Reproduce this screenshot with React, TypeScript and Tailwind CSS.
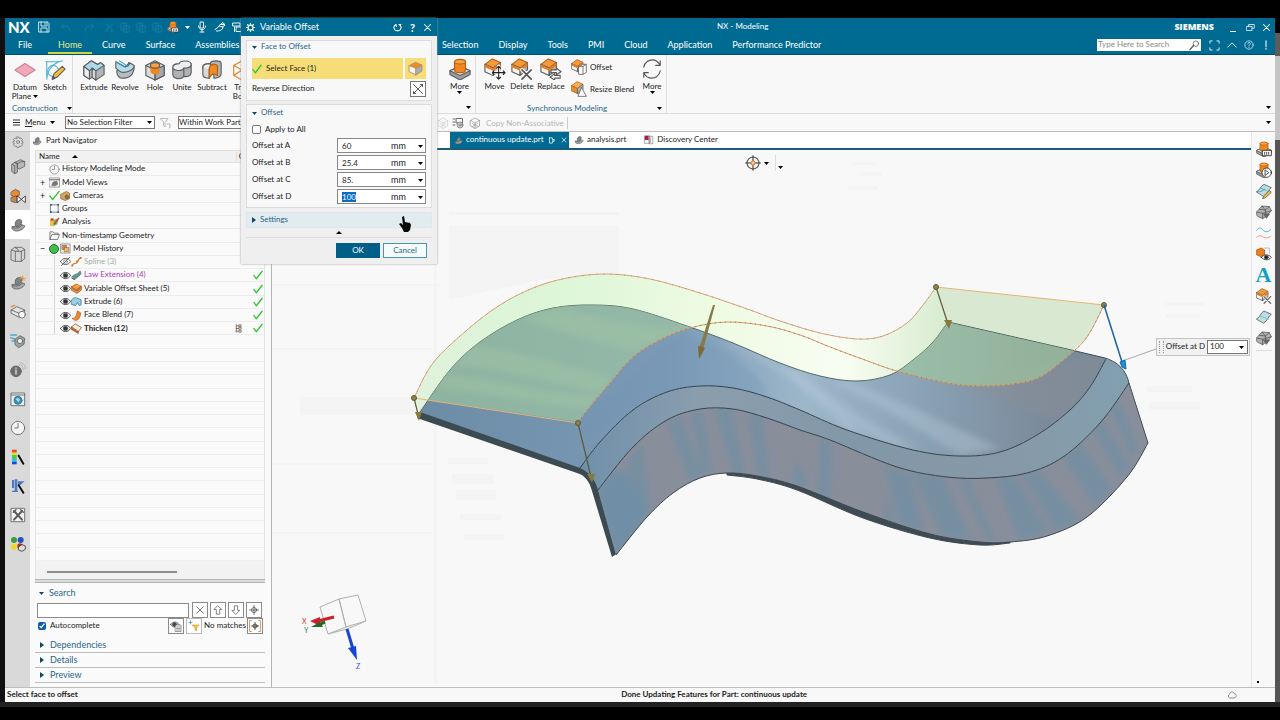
import type { ReactNode } from "react";

type Pt = [number, number];

// Smooth path through a list of points (Catmull-Rom to Bezier)
function smooth(pts: Pt[], start: "M" | "L" = "M") {
  let d = `${start}${pts[0][0]},${pts[0][1]}`;
  for (let i = 0; i < pts.length - 1; i++) {
    const p0 = pts[i - 1] ?? pts[i];
    const p1 = pts[i];
    const p2 = pts[i + 1];
    const p3 = pts[i + 2] ?? p2;
    const c1 = [p1[0] + (p2[0] - p0[0]) / 6, p1[1] + (p2[1] - p0[1]) / 6];
    const c2 = [p2[0] - (p3[0] - p1[0]) / 6, p2[1] - (p3[1] - p1[1]) / 6];
    d += `C${c1[0].toFixed(1)},${c1[1].toFixed(1)} ${c2[0].toFixed(1)},${c2[1].toFixed(1)} ${p2[0]},${p2[1]}`;
  }
  return d;
}

const rev = (pts: Pt[]) => [...pts].reverse() as Pt[];

/* ---------- icons ---------- */

function Svg({ className, children, box = 24 }: { className: string; children: ReactNode; box?: number }) {
  return (
    <svg className={`shrink-0 ${className}`} viewBox={`0 0 ${box} ${box}`} fill="none" stroke="#5a5a5a" strokeWidth="1.2" strokeLinejoin="round" strokeLinecap="round" aria-hidden="true">
      {children}
    </svg>
  );
}

function Box({ top = "#f08a24", left = "#f4f4f4", right = "#a9adb0" }: { top?: string; left?: string; right?: string }) {
  return (
    <g>
      <path d="M2 7 11 2l10 4-9 5z" fill={top} />
      <path d="M2 7l10 4v10L2 16z" fill={left} />
      <path d="M12 11l9-5v9l-9 6z" fill={right} />
    </g>
  );
}

// Block with an orange upper half, used by the synchronous tools
function CapBox() {
  return (
    <g>
      <path d="M1 7 9 1l9 4-8 6z" fill="#f39a3c" stroke="#b35f10" />
      <path d="M1 7l9 4v8l-9-4z" fill="#f4f4f4" />
      <path d="M10 11l8-6v8l-8 6z" fill="#b5b8ba" />
      <path d="M1 7l9 4 8-6v4l-8 5-9-4z" fill="#e57f1f" stroke="none" />
    </g>
  );
}

function Stack() {
  return (
    <g>
      <path d="M1 14l11-5 11 5v4l-11 6-11-6z" fill="#9b9fa3" />
      <path d="M1 14l11-5 11 5-11 5z" fill="#e4e6e8" />
      <path d="M6 4v9c0 4 12 4 12 0V4z" fill="#ef8620" stroke="#b35f10" />
      <ellipse cx="12" cy="4" rx="6" ry="2.500" fill="#f9a544" stroke="#b35f10" />
    </g>
  );
}

function Shell() {
  return (
    <g>
      <path d="M3 15c-1 3 2 6 7 6 6 0 12-4 12-8l-4-1c-3-4-10-2-9 1z" fill="#a3a7aa" />
      <path d="M8 12c-2-7 6-10 9-7 2 3-1 8-6 10z" fill="#7f8487" />
      <path d="M3 15c4 3 12 2 15-3" />
    </g>
  );
}

const glyphs: Record<string, ReactNode> = {
  datum: <path d="M1 12 12 5l11 7-11 7z" fill="#f2a9bb" stroke="#cf7f94" />,
  sketch: (
    <g>
      <path d="M2 3h14M3 22C4 12 8 5 20 2M3 3v18" stroke="#4bb4d8" />
      <circle cx="10" cy="13" r="6" stroke="#4bb4d8" />
      <path d="M9 22l2-6 9-8 3 3-9 9z" fill="#f3bd3e" />
      <path d="M9 22l1-3 2 2z" fill="#333" />
    </g>
  ),
  extrude: (
    <g>
      <path d="M1 8l8-6 7 4 3-2 4 3v10l-9 6-4-3-3 2-6-4z" fill="#aeb4b8" />
      <path d="M1 8l8-6 7 4 3-2 4 3-9 6-4-3-3 3z" fill="#a9dbe8" />
      <path d="M1 8l6 5v9l-6-4z" fill="#eceef0" />
      <path d="M10 10v10l4 3V13z" fill="#d5d9dc" />
    </g>
  ),
  revolve: (
    <g>
      <path d="M3 13c0-3 12-3 13-9l6 4c0 8-4 13-13 13-4 0-6-4-6-8z" fill="#b6bcc0" />
      <path d="M2 3l9 5c3 1 6-1 6-4l5 3c0 5-9 9-15 7l-5-4z" fill="#b5dde9" />
      <path d="M2 3l10 6M6 2l9 6" stroke="#3f9bbb" />
    </g>
  ),
  hole: (
    <g>
      <path d="M2 7l10-5 10 5v11l-10 5-10-5z" fill="#d8dadc" />
      <path d="M12 12l10-5v11l-10 5z" fill="#a5a9ac" />
      <path d="M2 7l10 5v11" />
      <path d="M7 7v6c0 5 10 5 10 0V7z" fill="#ef8620" stroke="none" />
      <ellipse cx="12" cy="7" rx="5" ry="3" fill="#f7a23f" />
    </g>
  ),
  unite: (
    <g>
      <path d="M2 9v8c0 5 9 6 12 2 4 1 8-1 8-4V5z" fill="#aeb2b5" />
      <path d="M2 9c0-3 4-4 7-4 1-4 13-4 13 1 0 3-3 4-8 4-2 4-12 3-12-1z" fill="#eceeef" />
      <path d="M14 10v9" />
    </g>
  ),
  subtract: (
    <g>
      <path d="M2 9c0-3 3-4 8-4 1-4 12-4 12 0v11c0 3-4 5-8 5v-9c-3 3-12 2-12-3z" fill="#b1b5b8" />
      <path d="M2 9c0-3 3-4 8-4l4 6c-3 3-12 2-12-2z" fill="#eceeef" />
      <path d="M2 9v8c0 3 3 4 7 4V11" fill="#d6d9da" />
      <path d="M9 10c1-5 6-5 9-3v11c-3-3-7-2-9 3z" fill="#f08a24" stroke="#b35f10" />
    </g>
  ),
  wire: <path d="M3 7l9-5 9 5v11l-9 5-9-5zM3 7l9 5 9-5M12 12v11M3 18l9-6 9 6" stroke="#e0802a" />,
  stack: <Stack />,
  move: (
    <g>
      <CapBox />
      <path d="M16 9v14M9 16h14" stroke="#fff" strokeWidth="4" />
      <path d="M16 9v14M9 16h14M14 11l2-2 2 2M14 21l2 2 2-2M11 14l-2 2 2 2M21 14l2 2-2 2" stroke="#222" />
    </g>
  ),
  del: (
    <g>
      <CapBox />
      <path d="M12 13l10 10M22 13L12 23" stroke="#fff" strokeWidth="4" />
      <path d="M12 13l10 10M22 13L12 23" stroke="#555" strokeWidth="1.800" />
    </g>
  ),
  replace: (
    <g>
      <CapBox />
      <path d="M12 13h6v-2l5 4-5 3v-2h-6zM22 19h-6v-2l-5 4 5 3v-2h6z" fill="#fff" />
    </g>
  ),
  offset: (
    <g>
      <CapBox />
      <path d="M12 11h6v12h-6zM14 11l3-3h6v12l-5 3M18 11l5-3" fill="#fff" />
    </g>
  ),
  blend: (
    <g>
      <path d="M1 7 9 1l9 4-8 6z" fill="#f9b25e" stroke="#b35f10" />
      <path d="M1 7l9 4v8l-9-4z" fill="#ee8a28" stroke="#b35f10" />
      <path d="M10 11l8-6v8l-8 6z" fill="#b5b8ba" />
      <path d="M16 10l7 13H11z" fill="#fff" />
    </g>
  ),
  cycle: (
    <g stroke="#555">
      <path d="M3 10C4 4 9 2 12 2c4 0 7 2 9 6M21 3v5h-5M21 14c-1 6-6 8-9 8-4 0-7-2-9-6M3 21v-5h5" />
    </g>
  ),
  shell: <Shell />,
  gear: (
    <g>
      <circle cx="12" cy="12" r="3" />
      <path d="M10 2h4l1 3 3-1 3 3-2 3 3 1v3l-3 1 2 3-3 3-3-1-1 3h-4l-1-3-3 1-3-3 2-3-3-1v-3l3-1-2-3 3-3 3 1z" />
    </g>
  ),
  part: (
    <g fill="#b5b8ba">
      <path d="M3 8l4-3 4 2v13l-4 2-4-3zM7 5l9-4 6 3v7l-8 4-3-2V7z" />
      <path d="M11 7l6-3 5 0M3 8l4 2v12" />
    </g>
  ),
  constraint: (
    <g>
      <path d="M2 6l6-4 6 3v6l-6 3-6-3z" fill="#f08a24" />
      <path d="M2 14l6-2 5 2v6l-5 2-6-2z" fill="#c98540" />
      <path d="M11 12l12 10V12L11 22z" fill="#fff" stroke="#222" />
    </g>
  ),
  book: (
    <g>
      <path d="M2 6l5-4h10l5 3v14l-5 4H7l-5-2z" fill="#d3d5d6" />
      <path d="M2 6l6 2h9l5-3M8 8v15M17 8v15M7 2l5 3v3" />
    </g>
  ),
  shellNew: (
    <g>
      <Shell />
      <path d="M19 1v8M15 5h8M16 2l6 6" stroke="#f08a24" />
    </g>
  ),
  tape: (
    <g>
      <path d="M2 9l8-5 12 5v6l-8 5-12-6z" fill="#e1e3e4" />
      <path d="M2 9l12 5 8-5M14 14v6" />
      <path d="M2 4l5-2" stroke="#f08a24" strokeWidth="2" />
      <circle cx="18" cy="16" r="5" fill="#fff" />
    </g>
  ),
  web: (
    <g>
      <path d="M2 3h20v19H2z" fill="#e9eef0" />
      <path d="M2 6h20" />
      <circle cx="12" cy="14" r="6" fill="#3a93b4" stroke="#27708b" />
      <path d="M8 12l4-2 3 3-2 4z" fill="#a8d6e5" stroke="none" />
    </g>
  ),
  reuse: (
    <g>
      <path d="M1 3h9M1 7l6 2M3 12h6" stroke="#49a9c9" strokeWidth="2" />
      <path d="M8 9l7-5 7 4-1 9-8 5-5-4z" fill="#9da2a5" />
      <circle cx="15" cy="12" r="4" fill="#e8eaeb" />
    </g>
  ),
  info: (
    <g>
      <circle cx="9" cy="14" r="8" fill="#6e6e6e" />
      <path d="M9 12v6M9 9v0.500" stroke="#ddd" strokeWidth="2" />
      <path d="M14 4c4 0 6 3 6 7M15 1c5 0 8 4 8 9" stroke="#aaa" />
    </g>
  ),
  clock: (
    <g>
      <circle cx="12" cy="12" r="10" fill="#f4f4f4" />
      <path d="M12 5v7H7" />
    </g>
  ),
  spectrum: (
    <g stroke="none">
      <path d="M3 1h7v5H3z" fill="#f0482c" />
      <path d="M3 5h7v4H3z" fill="#f5d72e" />
      <path d="M3 9h7v6H3z" fill="#3bd24a" />
      <path d="M3 15h7v4H3z" fill="#22c5e8" />
      <path d="M3 19h7v4H3z" fill="#1b44d8" />
      <path d="M13 10l7 12" stroke="#111" strokeWidth="3" />
    </g>
  ),
  thermo: (
    <g stroke="none">
      <path d="M3 3h3v12H3zM7 2h4v17H7zM3 19h9v2H3zM12 5h10l-6 5-4 1z" fill="#4b79c4" />
      <path d="M13 11l7 11" stroke="#111" strokeWidth="3" />
    </g>
  ),
  tools: (
    <g>
      <path d="M2 2h20v20H2z" fill="#f2f2f2" />
      <path d="M6 6l12 13M18 6L6 19" strokeWidth="3" />
      <path d="M5 8l4-4M16 4l4 4" strokeWidth="2" />
    </g>
  ),
  balls: (
    <g stroke="none">
      <circle cx="6" cy="6" r="4.500" fill="#3f9b3b" />
      <circle cx="16" cy="6" r="4.500" fill="#2450c0" />
      <circle cx="6" cy="16" r="4.500" fill="#f2d824" />
      <circle cx="15" cy="15" r="4" fill="#c02a20" />
      <path d="M13 16l5-3 5 2v5l-5 3-5-2z" fill="#ddd" stroke="#333" />
    </g>
  ),
  stackBox: (
    <g>
      <Stack />
      <path d="M10 14h13v8H10z" fill="#fff" stroke="#222" />
      <path d="M13 17v3M16 17v3M19 17v3" stroke="#222" />
    </g>
  ),
  stackPlay: (
    <g>
      <Stack />
      <circle cx="16" cy="16" r="7" fill="#fff" stroke="#222" />
      <path d="M14 12l5 4-5 4z" stroke="#222" />
    </g>
  ),
  sheet: (
    <g>
      <path d="M1 15C6 13 7 5 12 3l11 5c-5 3-5 9-11 13z" fill="#b9dfe4" />
      <path d="M7 11l12 4" stroke="#7fb9c2" />
    </g>
  ),
  sheetPen: (
    <g>
      <path d="M1 13C6 11 7 4 12 2l11 5c-5 3-5 9-11 13z" fill="#b9dfe4" />
      <path d="M1 13c6 1 9-1 12-4M7 8l8 3" stroke="#3f9bb0" />
      <path d="M10 23l2-4 8-8 3 3-9 8z" fill="#f3bd3e" />
    </g>
  ),
  mesh: (
    <g>
      <path d="M1 12L9 3l11 1 3 6-4 5-9 7-8-4z" fill="#b1b4b6" />
      <path d="M1 12l9 2 13-4M10 14v8M5 8l9 1 6-5M14 9l1 11M9 3l5 6" stroke="#555" />
      <path d="M12 15h8l-4 6z" fill="#666" />
    </g>
  ),
  waves: (
    <g>
      <path d="M1 8c4-6 7-3 10 0s7 3 11-1" stroke="#2ba0c4" />
      <path d="M1 18c4-3 7-2 10 0s7 2 11-1" stroke="#e98a5a" />
    </g>
  ),
  boxEye: (
    <g>
      <path d="M1 6l7-3 5 3v7l-6 3-6-3z" fill="#ee7d1e" stroke="#a95410" />
      <path d="M13 3h7v8" stroke="#aaa" />
      <path d="M8 17c4-5 11-5 15 0-4 5-11 5-15 0z" fill="#fff" stroke="#222" />
      <circle cx="15.500" cy="17" r="3" fill="#222" />
    </g>
  ),
  eye: (
    <g>
      <path d="M1 12C6 3 18 3 23 12 18 21 6 21 1 12z" fill="#fff" stroke="#444" strokeWidth="2" />
      <circle cx="12" cy="12" r="5" fill="#333" />
    </g>
  ),
  eyeOff: (
    <g>
      <path d="M1 12C6 3 18 3 23 12 18 21 6 21 1 12z" stroke="#555" strokeWidth="2" />
      <circle cx="12" cy="12" r="4" />
      <path d="M3 21L21 3" strokeWidth="2" />
    </g>
  ),
  spline: (
    <g>
      <path d="M2 21c4-8 10-2 12-8s4-8 8-9" stroke="#d9772a" strokeWidth="2.500" />
      <path d="M1 19h4v4H1zM11 10h4v4h-4zM19 2h4v4h-4z" fill="#d9772a" stroke="none" />
    </g>
  ),
  law: (
    <g>
      <path d="M2 15C6 8 12 12 20 2l2 6c-4 6-10 8-14 13z" fill="#5f949c" />
      <path d="M2 18l6 3" strokeWidth="2" />
    </g>
  ),
  varSheet: (
    <g>
      <path d="M1 8l10-6 12 5-10 7z" fill="#f08a24" stroke="#a95410" />
      <path d="M1 8v8l12 7 10-8V7l-10 7z" fill="#c0702a" stroke="#a95410" />
      <path d="M5 11l10-6M9 13l10-7M3 15l10 5 9-7" stroke="#fbd29c" />
    </g>
  ),
  extrudeS: <path d="M1 10c2-6 8-8 13-5l8 3v11l-4 2-4-7-4 7-9-3z" fill="#9ccfe0" stroke="#3f86a0" strokeWidth="2" />,
  faceBlend: <path d="M3 18C12 18 12 8 14 2l7 4c0 8-3 16-11 17z" fill="#f08a24" stroke="#8b4c15" />,
  thicken: (
    <g>
      <path d="M1 9l8-7 14 8-7 9z" fill="#f7eee6" stroke="#b5642d" strokeWidth="2" />
      <path d="M1 9v5l15 9v-4z" fill="#c26a33" stroke="#7b3d15" />
    </g>
  ),
  views: (
    <g>
      <path d="M1 2h22v20H1z" fill="#f4f4f4" />
      <path d="M1 6h22" strokeWidth="2" />
      <path d="M6 18l3-7 8-2 2 7-6 3z" fill="#777" />
    </g>
  ),
  camera: (
    <g>
      <path d="M2 9l12-6 7 4v12l-10 4-9-4z" fill="#d8a45c" stroke="#5d4525" />
      <circle cx="15" cy="15" r="4" fill="#8d6b3b" />
    </g>
  ),
  groups: (
    <g>
      <path d="M4 4h16v16H4z" stroke="#48616e" strokeWidth="1.600" />
      <path d="M2 2h4v4H2zM18 2h4v4h-4zM2 18h4v4H2zM18 18h4v4h-4z" fill="#48616e" stroke="none" />
    </g>
  ),
  analysis: (
    <g stroke="none">
      <path d="M2 4h8v16H2z" fill="#efc23c" />
      <path d="M4 3h6v5H4z" fill="#d8372c" />
      <path d="M10 6l11-3-3 13-9 4z" fill="#7db36a" />
      <path d="M12 15l9-12" stroke="#c03a2b" strokeWidth="3" />
    </g>
  ),
  folder: <path d="M2 20V4h7l2 3h9v3M2 20L6 10h17l-4 10z" fill="#fafafa" strokeWidth="1.600" />,
  history: (
    <g>
      <path d="M2 2h20v20H2z" fill="#eee" />
      <path d="M5 5h9v9H5z" fill="#ef8620" />
      <path d="M10 10h9v9h-9z" fill="#f9b763" />
    </g>
  ),
  save: (
    <g stroke="#dff1f8" strokeWidth="1.800">
      <path d="M2 2h17l3 3v17H2zM6 2v8h12V2M6 22v-8h12v8M14 4v3" />
    </g>
  ),
  undo: <path d="M9 3L3 9l6 6M3 9h11c5 0 8 4 7 10" stroke="#1c7ca3" strokeWidth="2" />,
  redo: <path d="M15 3l6 6-6 6M21 9H10c-5 0-8 4-7 10" stroke="#1c7ca3" strokeWidth="2" />,
  cut: <path d="M4 4l16 14M4 18L20 4M3 20a3 3 0 1 0 4-4M21 20a3 3 0 1 1-4-4" stroke="#1c7ca3" strokeWidth="2" />,
  copy: <path d="M3 3h11v14H3zM9 8h11v14H9z" stroke="#1c7ca3" strokeWidth="2" />,
  mic: (
    <g stroke="#e6f4fa" strokeWidth="2">
      <path d="M9 2h6v12H9zM5 10c0 10 14 10 14 0M12 18v4M8 22h8" />
    </g>
  ),
  touch: <path d="M2 17l7-5 3-5h9M5 20c6 0 12-1 13-8l-7-2M14 6l4-3 4 5-5 4" stroke="#fff" strokeWidth="2" />,
  tile: <path d="M2 4h14v6H2zM9 12h12v9H9zM5 12v9" stroke="#e6f4fa" strokeWidth="2" />,
  restore: <path d="M7 9V4h15v10h-6M2 9h14v11H2z" stroke="#fff" strokeWidth="2" />,
  close: <path d="M4 4l16 16M20 4L4 20" stroke="#fff" strokeWidth="2.800" />,
  reset: <path d="M8 4c-9 4-6 17 4 17s13-13 4-17h5M8 4l1 5" stroke="#fff" strokeWidth="2.800" />,
  gearW: (
    <g stroke="#fff">
      <circle cx="12" cy="12" r="6.500" strokeWidth="3" />
      <path d="M12 1v3M12 20v3M1 12h3M20 12h3M4 4l2 2M18 18l2 2M20 4l-2 2M4 20l2-2" strokeWidth="3" />
    </g>
  ),
  search: (
    <g>
      <circle cx="15" cy="8" r="6" fill="#fff" strokeWidth="1.600" />
      <path d="M10 12l-8 9" strokeWidth="3" />
    </g>
  ),
  full: <path d="M2 7V2h5M17 2h5v5M22 17v5h-5M7 22H2v-5" stroke="#dff1f8" strokeWidth="2" />,
  chevUp: <path d="M2 17l10-10 10 10" stroke="#fff" strokeWidth="2" />,
  help: (
    <g stroke="#dff1f8" strokeWidth="1.800">
      <circle cx="12" cy="12" r="10" />
      <path d="M9 9c0-4 7-4 6 0 0 2-3 2-3 5M12 17v1" />
    </g>
  ),
  bang: <path d="M12 2v14M12 20v2" stroke="#fff" strokeWidth="2.500" />,
  check: <path d="M2 13l6 8L22 3" stroke="#2fc42f" strokeWidth="3" />,
  filter: (
    <g stroke="#aaa" strokeWidth="1.600">
      <path d="M1 3h15l-6 8v9l-3-3v-6z" />
      <path d="M14 14h6v6M18 22l2-2" />
    </g>
  ),
  pattern: (
    <g>
      <path d="M2 4h4M2 10h4M2 16h4M9 3h12v9H9z" strokeWidth="1.800" />
      <circle cx="16" cy="16" r="6" fill="#ddd" />
      <circle cx="16" cy="16" r="2.500" />
    </g>
  ),
  cubeWire: <path d="M3 7l9-5 9 5v11l-9 5-9-5zM3 7l9 5 9-5M12 12v11M7 19l10-6M7 13l10 6" stroke="#888" />,
  discovery: (
    <g>
      <path d="M2 2h11v18H2z" fill="#fff" />
      <path d="M2 2h9v10H2z" fill="#b0183d" stroke="none" />
      <path d="M13 3h8v18h-8zM16 6v12" />
    </g>
  ),
  pin: <path d="M5 3h10v6h6M5 3v18h10v-6h6V9l-5 3" stroke="#fff" strokeWidth="2.500" />,
  cross: <path d="M4 4l16 16M20 4L4 20" stroke="#333" strokeWidth="1.600" />,
  reverse: <path d="M3 3l18 18M21 3L3 21M17 3h4v4M3 17v4h4" stroke="#333" strokeWidth="1.600" />,
  upArrow: <path d="M12 2l9 9h-5v11H8V11H3z" strokeWidth="1.800" />,
  downArrow: <path d="M12 22l9-9h-5V2H8v11H3z" strokeWidth="1.800" />,
  target: (
    <g stroke="#333" strokeWidth="1.600">
      <circle cx="12" cy="12" r="6" />
      <path d="M12 1v22M1 12h22" />
    </g>
  ),
  targetBr: (
    <g stroke="#333" strokeWidth="1.600">
      <circle cx="12" cy="12" r="4" />
      <path d="M12 5v14M5 12h14" />
      <path d="M5 1H1v22h4M19 1h4v22h-4" stroke="#c98a3a" />
    </g>
  ),
  eyeDoc: (
    <g>
      <path d="M1 9C5 2 14 2 18 9c-4 7-13 7-17 0z" fill="#bbb" />
      <circle cx="9" cy="9" r="4" fill="#444" />
      <path d="M11 10h11v13H11z" fill="#fff" />
      <path d="M13 14h7M13 17h7M13 20h7" />
    </g>
  ),
  plusFilter: (
    <g>
      <path d="M2 5h6M5 2v6" stroke="#2a6fa8" />
      <path d="M9 10h13l-5 6v6l-3-2v-4z" fill="#f0c64c" stroke="#c99a2a" />
    </g>
  ),
  view: (
    <g strokeWidth="1.600">
      <circle cx="12" cy="12" r="9" stroke="#555" />
      <path d="M12 1v8M12 15v8M1 12h8M15 12h8" stroke="#333" />
      <circle cx="12" cy="12" r="3" stroke="#e0802a" fill="#f5c9a0" />
    </g>
  ),
  cloud: <path d="M6 19a5 5 0 0 1 0-9c1-7 10-7 12-1 6 0 6 9 0 10z" strokeWidth="1.600" />,
  tree: (
    <g stroke="#6b5544" strokeWidth="2">
      <path d="M6 2v20M6 5h6M6 12h6M6 19h6M14 2h5v5h-5zM14 9h5v5h-5zM14 17h5v5h-5z" />
    </g>
  ),
};

function Icon({ name, className = "size-4" }: { name: string; className?: string }) {
  return <Svg className={className}>{glyphs[name]}</Svg>;
}

function Down({ className = "text-black" }: { className?: string }) {
  return (
    <svg className={`h-[3px] w-[5px] shrink-0 ${className}`} viewBox="0 0 5 3" aria-hidden="true">
      <path d="M0 0h5L2.500 3z" fill="currentColor" />
    </svg>
  );
}

function Right() {
  return (
    <svg className="h-[6px] w-[4px] shrink-0 text-[#0b4a66]" viewBox="0 0 4 6" aria-hidden="true">
      <path d="M0 0l4 3-4 3z" fill="currentColor" />
    </svg>
  );
}

/* ---------- top ---------- */

const leftTabs = ["Home", "Curve", "Surface", "Assemblies"];
const rightTabs = ["Selection", "Display", "Tools", "PMI", "Cloud", "Application", "Performance Predictor"];

function TitleBar() {
  return (
    <header className="border-b border-[#004f70] bg-[#006b92] text-white">
      <div className="flex h-[18px] items-center">
        <div className="flex w-[240px] shrink-0 items-center pl-[3px]">
          <span className="w-[30px] shrink-0 text-[15px] leading-[18px] font-black">NX</span>
          <Icon name="save" className="size-3" />
          <div className="ml-[10px] flex shrink-0 items-center gap-[5px]">
            <Icon name="undo" className="size-[11px]" />
            <Icon name="redo" className="ml-2 size-[11px]" />
            <Icon name="cut" className="ml-1 size-[11px]" />
            <Icon name="copy" className="size-[11px]" />
            <Icon name="copy" className="size-[11px]" />
            <Icon name="copy" className="size-[11px]" />
          </div>
          <div className="ml-1 flex shrink-0 items-center gap-[6px]">
            <Icon name="stackBox" className="size-3" />
            <Down className="text-white" />
            <Icon name="mic" className="size-3" />
            <Icon name="touch" className="size-3" />
            <Icon name="tile" className="size-3" />
          </div>
        </div>
        <h1 className="flex-1 pl-[66px] text-center text-[8px]">NX - Modeling</h1>
        <span className="mr-4 font-['Open_Sans',sans-serif] text-[9px] font-extrabold">SIEMENS</span>
        <div className="flex items-center gap-[7px] pr-1">
          <button aria-label="Minimize" className="flex size-[9px] items-end"><span className="h-px w-[6px] bg-white" /></button>
          <button aria-label="Restore"><Icon name="restore" className="size-[9px]" /></button>
          <button aria-label="Close"><Icon name="close" className="size-[9px]" /></button>
        </div>
      </div>
      <nav className="flex h-[18px] items-center text-[9px]" aria-label="Ribbon tabs">
        <div className="flex h-full w-[427px] shrink-0 items-center">
          <a href="#file" className="mr-4 ml-[13px]">File</a>
          {leftTabs.map((t) => (
            <a
              key={t}
              href={`#${t.toLowerCase()}`}
              className={`flex h-full items-center px-[10px] ${t === "Home" ? "border-b-2 border-[#c9d84a] pt-[2px] text-[#e8ec8a]" : ""}`}
            >
              {t}
            </a>
          ))}
        </div>
        {rightTabs.map((t) => (
          <a key={t} href={`#${t.toLowerCase()}`} className="px-[10px] whitespace-nowrap">
            {t}
          </a>
        ))}
        <div className="ml-auto flex items-center gap-2 pr-1">
          <div className="flex h-3 w-[104px] items-center bg-white pr-px">
            <input type="text" aria-label="Search commands" placeholder="Type Here to Search" className="w-full min-w-0 px-px text-[8px] text-black outline-none placeholder:text-[#8a8a8a]" />
            <Icon name="search" className="size-[11px]" />
          </div>
          <Icon name="full" className="size-[11px]" />
          <Icon name="chevUp" className="-ml-px size-[10px]" />
          <Icon name="help" className="-ml-px size-[10px]" />
          <Icon name="bang" className="-ml-px size-[10px]" />
        </div>
      </nav>
    </header>
  );
}

function Tool({ icon, label, sub, className, arrow }: { icon: string; label: string; sub?: string; className: string; arrow?: boolean }) {
  return (
    <button className={`flex shrink-0 flex-col items-center ${className}`}>
      <Icon name={icon} className="size-[22px]" />
      <span className="mt-px whitespace-nowrap">{label}</span>
      {sub && (
        <span className="flex items-center gap-[2px] leading-[8px]">
          {sub}
          {arrow && <Down />}
        </span>
      )}
      {arrow && !sub && <Down />}
    </button>
  );
}

function Ribbon() {
  return (
    <section className="flex h-[59px] border-b border-[#dcdcdc] bg-[#f8f8f8] text-[8px] leading-[10px] text-[#222]">
      <div className="flex w-[68px] shrink-0 flex-col border-r border-[#dedede] pt-1">
        <div className="flex">
          <Tool icon="datum" label="Datum" sub="Plane" arrow className="ml-[5px] w-[30px]" />
          <Tool icon="sketch" label="Sketch" className="w-[30px] self-start" />
        </div>
        <div className="mt-auto flex items-center gap-[9px] pl-[7px] text-[#27678a]">
          Construction <Down />
        </div>
      </div>
      <div className="flex w-[364px] shrink-0 items-start pt-1">
        <Tool icon="extrude" label="Extrude" className="ml-[5px] w-8" />
        <Tool icon="revolve" label="Revolve" className="w-[30px]" />
        <Tool icon="hole" label="Hole" className="w-[30px]" />
        <Tool icon="unite" label="Unite" className="w-[24px]" />
        <Tool icon="subtract" label="Subtract" className="w-9" />
        <Tool icon="wire" label="Trim" sub="Body" className="w-6" />
      </div>
      <div className="flex w-[39px] shrink-0 flex-col items-center border-r border-[#dedede] pt-[3px]">
        <Tool icon="stack" label="More" arrow className="ml-[7px] w-9" />
        <span className="mt-auto mb-1 ml-[24px]"><Down /></span>
      </div>
      <div className="flex w-[191px] shrink-0 flex-col border-r border-[#dedede] pt-[3px]">
        <div className="flex">
          <Tool icon="move" label="Move" className="ml-1 w-[29px]" />
          <Tool icon="del" label="Delete" className="w-[26px]" />
          <Tool icon="replace" label="Replace" className="w-8" />
          <div className="flex w-[72px] flex-col gap-[6px] pt-px pl-1">
            <button className="flex items-center gap-[3px]"><Icon name="offset" className="size-4" />Offset</button>
            <button className="flex items-center gap-[3px] whitespace-nowrap"><Icon name="blend" className="size-4" />Resize Blend</button>
          </div>
          <Tool icon="cycle" label="More" arrow className="w-[26px]" />
        </div>
        <div className="mt-auto flex items-center justify-between pr-1 pl-[51px] text-[#27678a]">
          Synchronous Modeling <Down />
        </div>
      </div>
      <span className="mt-auto mr-1 mb-1 ml-auto"><Down /></span>
    </section>
  );
}

function SelectionBar() {
  return (
    <section className="flex h-[18px] items-center border-b border-[#bdbdbd] bg-[#f8f8f8] text-[8px] text-[#222]">
      <div className="flex w-[436px] shrink-0 items-center">
        <button className="ml-2 flex w-[52px] items-center gap-[5px]">
          <svg className="h-[7px] w-[7px]" viewBox="0 0 7 7" aria-hidden="true"><path d="M0 1h7M0 3.500h7M0 6h7" stroke="#333" /></svg>
          <span><u>M</u>enu</span>
          <Down />
        </button>
        <div className="relative h-[13px] w-[90px] border border-[#777] bg-white">
          <select aria-label="Selection filter" className="block h-full w-full appearance-none pl-px leading-[11px]">
            <option>No Selection Filter</option>
          </select>
          <span className="pointer-events-none absolute top-1 right-[2px]"><Down /></span>
        </div>
        <Icon name="filter" className="mr-[6px] ml-[5px] size-3" />
        <div className="h-[13px] w-[90px] border border-[#777] bg-white">
          <select aria-label="Selection scope" className="block h-full w-full appearance-none leading-[11px]">
            <option>Within Work Part</option>
          </select>
        </div>
      </div>
      <div className="flex items-center gap-[5px] text-[#b5b5b5]">
        <Icon name="cubeWire" className="-ml-1 size-3 opacity-40" />
        <Icon name="pattern" className="-ml-[2px] size-3" />
        <Icon name="cubeWire" className="size-3" />
        <span className="border-r border-[#ccc] pr-[3px] leading-[12px]">Copy Non-Associative</span>
      </div>
      <span className="mr-1 ml-auto"><Down /></span>
    </section>
  );
}

/* ---------- left side ---------- */

const rail = ["gear", "part", "constraint", "shell", "book", "shellNew", "tape", "reuse", "info", "web", "clock", "spectrum", "thermo", "tools", "balls"];

type Row = { label: string; icons: string[]; twist?: string; child?: boolean; ok?: boolean; tone?: string };

const rows: Row[] = [
  { label: "History Modeling Mode", icons: ["clock"] },
  { label: "Model Views", icons: ["views"], twist: "+" },
  { label: "Cameras", icons: ["check", "camera"], twist: "+" },
  { label: "Groups", icons: ["groups"] },
  { label: "Analysis", icons: ["analysis"] },
  { label: "Non-timestamp Geometry", icons: ["folder"] },
  { label: "Model History", icons: ["ball", "history"], twist: "−" },
  { label: "Spline (3)", icons: ["eyeOff", "spline"], child: true, tone: "text-[#a9a9a9]" },
  { label: "Law Extension (4)", icons: ["eye", "law"], child: true, ok: true, tone: "text-[#b13ab8]" },
  { label: "Variable Offset Sheet (5)", icons: ["eye", "varSheet"], child: true, ok: true },
  { label: "Extrude (6)", icons: ["eye", "extrudeS"], child: true, ok: true },
  { label: "Face Blend (7)", icons: ["eye", "faceBlend"], child: true, ok: true },
  { label: "Thicken (12)", icons: ["eye", "thicken"], child: true, ok: true, tone: "font-bold" },
];
const blanks = Array.from({ length: 17 }, (_, i) => i);

function ResourceBar() {
  return (
    <nav className="flex w-[25px] shrink-0 flex-col bg-[#d9d9d9]" aria-label="Resource bar">
      {rail.map((name) => (
        <button
          key={name}
          aria-label={name}
          className={`flex w-full items-center justify-center ${name === "gear" ? "h-5 pb-px" : "h-[29px]"} ${name === "shell" ? "bg-white" : ""}`}
        >
          <Icon name={name} className={name === "gear" ? "size-3" : "size-4"} />
        </button>
      ))}
    </nav>
  );
}

function TreeRow({ row }: { row: Row }) {
  return (
    <li className="flex min-h-0 flex-1 items-center border-b border-[#ececec]">
      <span className="flex h-full w-[13px] shrink-0 items-center justify-center text-[9px] leading-none">{row.twist}</span>
      {row.child && <span className="ml-[5px] h-full w-3 shrink-0 border-l border-[#d5d5d5]" />}
      <span className={`flex shrink-0 items-center ${row.child ? "-ml-[6px]" : ""}`}>
        {row.icons.map((name) =>
          name === "ball" ? (
            <span key={name} className="mr-px size-[10px] rounded-full border border-[#23692c] bg-[#3fbf4b]" />
          ) : (
            <Icon key={name} name={name} className="size-[11px]" />
          ),
        )}
      </span>
      <span className={`ml-[2px] whitespace-nowrap ${row.tone ?? ""}`}>{row.label}</span>
      <span className="ml-auto flex items-center gap-[10px] pr-[1px]">
        {row.tone === "font-bold" && <Icon name="tree" className="size-[9px]" />}
        {row.ok && <Icon name="check" className="size-[10px]" />}
      </span>
    </li>
  );
}

function PartNavigator() {
  return (
    <aside className="flex w-[242px] shrink-0 flex-col border-r border-[#b5b5b5] bg-[#fafafa] pr-[6px] pl-[5px] text-[8px] text-[#222]">
      <h2 className="-ml-[3px] flex h-[18px] items-center gap-[4px] text-[8px]">
        <Icon name="shell" className="size-[10px]" />
        Part Navigator
      </h2>
      <div className="flex h-[13px] items-center border border-[#dedede] bg-[#f1f1f1] pl-[3px]">
        Name
        <svg className="ml-3 h-[3px] w-[6px]" viewBox="0 0 6 3" aria-hidden="true"><path d="M0 3h6L3 0z" fill="#000" /></svg>
        <span className="ml-auto border-l border-[#dedede] pr-5 pl-[2px]">C</span>
      </div>
      <ul className="flex flex-1 flex-col border-x border-[#e3e3e3]">
        {rows.map((row) => (
          <TreeRow key={row.label} row={row} />
        ))}
        {blanks.map((n) => (
          <li key={n} className="min-h-0 flex-1 border-b border-[#efefef]" />
        ))}
      </ul>
      <div className="flex h-[18px] shrink-0 items-center border-x border-[#e3e3e3] bg-[#f2f2f2] pt-1 pl-[11px]">
        <span className="h-[2px] w-[130px] bg-[#8d8d8d]" />
      </div>
      <div className="h-1 border-y border-[#b5b5b5] bg-[#d9dcdd]" />
      <section className="mt-px flex flex-col pb-1">
        <button className="flex h-[18px] items-center gap-[5px] pl-1 text-[9px] text-[#27678a]">
          <Down className="text-[#0b4a66]" />
          Search
        </button>
        <div className="flex items-center gap-[2px] pl-[2px]">
          <input type="text" aria-label="Find in navigator" className="mr-px h-[15px] w-[152px] border border-[#8b8b8b] bg-white outline-none" />
          {["cross", "upArrow", "downArrow", "target"].map((name) => (
            <button key={name} aria-label={name} className="flex size-4 items-center justify-center border border-[#8b8b8b] bg-white">
              <Icon name={name} className="size-[10px]" />
            </button>
          ))}
        </div>
        <div className="flex h-4 items-center pl-[3px]">
          <label className="flex items-center gap-1">
            <input type="checkbox" defaultChecked className="size-2 accent-[#0a5ea8]" />
            Autocomplete
          </label>
          <button aria-label="Show details" className="ml-auto flex size-4 items-center justify-center border border-[#8b8b8b] bg-white"><Icon name="eyeDoc" className="size-3" /></button>
          <button aria-label="Filter" className="mr-[2px] ml-[2px] flex size-4 items-center justify-center border border-[#bbb] bg-white"><Icon name="plusFilter" className="size-3" /></button>
          <span className="mr-px whitespace-nowrap">No matches</span>
          <button aria-label="Locate" className="mr-[2px] flex size-4 items-center justify-center border border-[#8b8b8b] bg-white"><Icon name="targetBr" className="size-3" /></button>
        </div>
      </section>
      {["Dependencies", "Details", "Preview"].map((t) => (
        <button key={t} className="flex h-[15px] shrink-0 items-center gap-[6px] border-b border-[#bcbcbc] pl-[5px] text-[9px] text-[#27678a]">
          <Right />
          {t}
        </button>
      ))}
      <div className="h-[4px] shrink-0" />
    </aside>
  );
}

/* ---------- model ---------- */

const solidBack: Pt[] = [[420, 412], [450, 370], [480, 342], [517, 320], [553, 308], [593, 305], [633, 309], [687, 326], [733, 343], [780, 363], [820, 376], [857, 381], [890, 375], [913, 360], [933, 342], [948, 322]];
const foldUpper: Pt[] = [[580, 468], [600, 442], [633, 410], [667, 392], [700, 386], [733, 388], [767, 397], [800, 410], [847, 430], [913, 450], [960, 456], [1000, 452], [1037, 435], [1070, 410], [1090, 387], [1106, 359]];
const foldLower: Pt[] = [[598, 490], [633, 447], [667, 420], [700, 409], [733, 409], [767, 418], [800, 430], [830, 440], [897, 467], [947, 477], [987, 478], [1027, 473], [1063, 457], [1100, 423], [1129, 383]];
const solidBottom: Pt[] = [[616, 555], [647, 517], [673, 493], [700, 478], [727, 473], [757, 476], [797, 486], [863, 512], [930, 534], [980, 542], [1010, 542], [1047, 536], [1087, 517], [1127, 477], [1148, 443]];
const underside: Pt[] = [[727, 475], [757, 479], [797, 490], [863, 518], [930, 538], [980, 545], [1010, 543]];
const sheetBack: Pt[] = [[414, 398], [433, 363], [467, 330], [500, 305], [533, 288], [567, 278], [607, 274], [650, 279], [700, 293], [750, 310], [780, 321], [820, 333], [857, 339], [883, 336], [907, 323], [923, 305], [936, 287]];
const sheetFront: Pt[] = [[578, 422], [593, 403], [610, 383], [633, 357], [660, 340], [690, 328], [727, 322], [767, 326], [800, 335], [830, 347], [865, 360], [900, 372], [947, 383], [980, 386], [1013, 384], [1040, 377], [1067, 357], [1087, 337], [1104, 305]];

const solidTopPath = `${smooth(solidBack)}L1067,349 L1105,358${smooth(rev(foldUpper), "L")}Z`;
const blendPath = `${smooth(foldUpper)}C1118,362 1126,370 1129,383${smooth(rev(foldLower), "L")}C596,482 590,472 580,468Z`;
const sidePath = `${smooth(foldLower)}L1148,443${smooth(rev(solidBottom), "L")}Z`;
const sheetPath = `${smooth(sheetBack)}L1104,305${smooth(rev(sheetFront), "L")}Z`;
const behindPath = `${smooth(sheetBack)}L948,322${smooth(rev(solidBack), "L")}Z`;

const streaks = [
  "M628 460l14-16 8 62-10 14z", "M618 480l10-14 14 58-8 10z", "M668 424l12-8 24 60-14 6z", "M690 412l12-3 10 64-8 2z",
  "M715 408l16 0 14 66-12-1z", "M748 413l14 3 8 62-12-3z", "M820 438l12 4-2 58-12-4z", "M795 462l10 10 2 16-14-4z",
  "M884 466l26 7 14 60-24-8z", "M910 470l34 7 28 64-30-5z", "M958 478l10 0 28 64-8 0z", "M995 478l20-2 34 56-30 9z",
  "M1022 474l16-5 42 50-24 13z", "M1062 456l18-14 32 46-16 20z", "M1092 430l10-10 28 46-8 12z", "M1110 408l8-9 20 48-6 10z", "M888 492l6 30-10-3z",
];
const sheens = [
  "M740 344C800 372 840 410 870 441L846 430C820 400 780 366 724 342z",
  "M800 372C830 400 880 428 920 450L880 442C850 420 820 400 776 364z",
  "M850 382C900 400 960 430 1000 448L960 455C920 430 880 405 830 380z",
];
const bands = [
  "M470 346C520 350 580 372 612 378L600 392C560 384 500 366 452 366z",
  "M446 374C500 380 550 398 596 396L588 408C540 404 490 392 436 388z",
  "M560 308C610 322 660 334 690 326L640 348C600 346 560 330 520 318z",
];

const knobs: Pt[] = [[414, 398], [578, 423], [936, 287], [1104, 305]];

function Model() {
  return (
    <svg className="h-full w-full" viewBox="272 150 979 537" fill="none" role="img" aria-label="Offset sheet model">
      <defs>
        <linearGradient id="top" gradientUnits="userSpaceOnUse" x1="420" y1="400" x2="1110" y2="400">
          <stop offset="0" stopColor="#6c8ca6" />
          <stop offset="0.350" stopColor="#7c9ab6" />
          <stop offset="0.560" stopColor="#9db7ca" />
          <stop offset="0.720" stopColor="#8aa3b6" />
          <stop offset="0.900" stopColor="#7b8b9b" />
          <stop offset="1" stopColor="#748899" />
        </linearGradient>
        <linearGradient id="blend" gradientUnits="userSpaceOnUse" x1="580" y1="430" x2="1130" y2="430">
          <stop offset="0" stopColor="#7090aa" />
          <stop offset="0.220" stopColor="#8a9eae" />
          <stop offset="0.500" stopColor="#8297a8" />
          <stop offset="0.800" stopColor="#8699a8" />
          <stop offset="1" stopColor="#82a0b0" />
        </linearGradient>
        <linearGradient id="pale" gradientUnits="userSpaceOnUse" x1="420" y1="350" x2="950" y2="350">
          <stop offset="0" stopColor="#e0f2dc" />
          <stop offset="0.250" stopColor="#dcf6d6" />
          <stop offset="0.550" stopColor="#eefbe3" />
          <stop offset="0.800" stopColor="#f8fdf2" />
          <stop offset="1" stopColor="#d6ebce" />
        </linearGradient>
        <clipPath id="topClip"><path d={solidTopPath} /></clipPath>
        <clipPath id="sideClip"><path d={sidePath} /></clipPath>
        <clipPath id="sheetClip"><path d={sheetPath} /></clipPath>
        <filter id="soft" x="-20%" y="-20%" width="140%" height="140%"><feGaussianBlur stdDeviation="3" /></filter>
      </defs>

      {/* faint leftovers of the previous window */}
      <g fill="#f4f4f4">
        <path d="M449 212h170v3H449zM449 226h170v48l-80 6-90 20zM300 397h124v18H300z" />
        <path d="M272 284h168v2H272zM272 348h164v2H272zM272 463h164v2H272zM272 532h164v2H272zM434 264h3v420h-3z" />
        <path d="M448 458h40v6h-40zM452 474h42v10h-42zM456 490h40v10h-40zM460 514h42v6h-42zM464 534h40v6h-40z" />
        <path d="M852 162h24v3h-24zM860 172h22v4h-22zM848 186h30v4h-30zM1166 302h38v4h-38zM1166 314h34v4h-34zM1146 386h46v6h-46zM1150 402h50v8h-50z" />
      </g>

      {/* sheet lying behind the solid, then the right end of the sheet */}
      <path d={behindPath} fill="url(#pale)" />
      <path d="M936 287L1104 305L1087 337L1067 357L948 322Z" fill="#d9e9d1" />

      <path d="M417 413L430 409L580 460C594 468 597 482 600 490L618 553L612 557L592 491C589 480 584 475 577 473L417 418Z" fill="#3c4a52" />
      <path d={`${smooth(underside)}${smooth(rev(solidBottom.slice(4, 11)), "L")}Z`} fill="#3f4b52" stroke="#3f4b52" />
      <path d={solidTopPath} fill="url(#top)" />
      <g clipPath="url(#topClip)">
        <g filter="url(#soft)">
          {sheens.map((d) => <path key={d} d={d} fill="#b9cfdd" opacity="0.350" />)}
          <path d="M960 386L1110 350L1092 400L1060 420Z" fill="#8b8e97" opacity="0.450" />
          <path d="M680 330C740 350 760 380 770 395L640 400L590 440L578 424Z" fill="#6f92b4" opacity="0.350" />
        </g>
      </g>
      <path d={blendPath} fill="url(#blend)" />
      <path d={sidePath} fill="#898e9b" />
      <g clipPath="url(#sideClip)">
        <g filter="url(#soft)">
          {streaks.map((d) => <path key={d} d={d} fill="#6d8fa3" opacity="0.700" />)}
          <path d="M596 490L618 468L650 512L616 556Z" fill="#708fa6" />
        </g>
      </g>
      <path d={smooth(solidBack)} stroke="#546a68" />
      <path d="M948 322L1067 349L1105 358C1118 362 1126 370 1129 383L1148 443" stroke="#3d4d55" />
      <path d={smooth(foldUpper)} stroke="#33424b" />
      <path d={smooth(foldLower)} stroke="#33424b" />
      <path d={smooth(solidBottom)} stroke="#3a454c" />

      {/* translucent sheet over the solid */}
      <g clipPath="url(#topClip)">
        <path d={sheetPath} fill="#a5cf9d" opacity="0.580" />
        <g clipPath="url(#sheetClip)">
          <g filter="url(#soft)">
            {bands.map((d) => <path key={d} d={d} fill="#a9c9a4" opacity="0.350" />)}
          </g>
        </g>
      </g>
      <path d={smooth(sheetBack)} stroke="#dba27c" />
      <path d={smooth(sheetBack)} stroke="#8a7a3a" strokeDasharray="1 6" opacity="0.600" />
      <path d={smooth(sheetFront)} stroke="#d79a6c" />
      <path d={smooth(sheetFront)} stroke="#6d6640" strokeDasharray="1 4" opacity="0.700" />
      <path d="M414 398L578 423M936 287L1104 305" stroke="#e8b273" />

      {/* offset handles */}
      <path d="M414 398L418 414M578 423L591 477M936 287L948 324" stroke="#5d5a36" strokeWidth="1.200" />
      <path d="M415 412h7l-3 9zM587 474h8l-3 9zM944 320h8l-3 9z" fill="#85793e" />
      <path d="M713 305L715 305L703 350L699 349Z" fill="#86794a" />
      <path d="M698 346l7 2-6 11z" fill="#7a6a33" />
      {knobs.map(([x, y]) => <circle key={x} cx={x} cy={y} r="2.500" fill="#8f8450" stroke="#5e5730" />)}
      <path d="M1104 305L1122 362" stroke="#1a62a3" strokeWidth="1.500" />
      <path d="M1120 362l5-2 1 9-4-2z" fill="#1f8fd6" stroke="#1567a6" />
      <path d="M1125 360L1156 349" stroke="#aaa" />

      {/* orientation triad */}
      <path d="M320 607L339 599L346 627L328 634ZM339 599L358 595L366 621L346 627ZM328 634L347 629L366 621" stroke="#b0b0b0" />
      <path d="M334 617L318 621" stroke="#cf2027" strokeWidth="3" />
      <path d="M310 621l10-4v9z" fill="#cf2027" />
      <path d="M325 622L318 625" stroke="#1f6b2c" strokeWidth="3" />
      <path d="M311 627l9-5 3 5z" fill="#1f6b2c" />
      <path d="M347 629L353 649" stroke="#1744d4" strokeWidth="3" />
      <path d="M348 648l8-2 1 14z" fill="#1744d4" />
      <g fontSize="7" fontFamily="Lato, sans-serif">
        <text x="302" y="624" fill="#d0342c">X</text>
        <text x="304" y="633" fill="#2c7a38">Y</text>
        <text x="356" y="669" fill="#3f4fd8">Z</text>
      </g>
    </svg>
  );
}

function Workspace() {
  return (
    <main className="flex min-w-0 flex-1 flex-col bg-[#f8f8f8] text-[8px] text-[#222]">
      <div className="flex h-[18px] items-stretch border-b-2 border-[#1b5c7b] bg-white pl-[178px]" role="tablist">
        <button role="tab" aria-selected="true" className="flex w-[119px] items-center bg-[#006b92] pl-1 text-white">
          <Icon name="shell" className="mr-[3px] size-[9px]" />
          continuous update.prt
          <Icon name="pin" className="ml-1 size-[7px]" />
          <Icon name="close" className="ml-[6px] size-[6px]" />
        </button>
        <button role="tab" aria-selected="false" className="ml-[5px] flex items-center gap-[3px]">
          <Icon name="shell" className="size-[10px]" />
          analysis.prt
        </button>
        <button role="tab" aria-selected="false" className="ml-[18px] flex items-center gap-[3px]">
          <Icon name="discovery" className="size-[10px]" />
          Discovery Center
        </button>
      </div>
      <div className="relative flex-1">
        <div className="absolute inset-0"><Model /></div>
        <div className="absolute top-[5px] left-[473px] flex items-center gap-[3px]">
          <Icon name="view" className="size-4" />
          <Down />
          <span className="ml-[3px] flex h-4 items-end border-l border-[#ddd] pb-[2px] pl-[2px]"><Down /></span>
        </div>
        <div className="absolute top-[188px] right-[1px] flex h-[18px] w-[94px] items-center border border-[#c4c4c4] bg-[#f1f1f1] pl-[2px]">
          <span className="h-3 w-[5px] border-x border-dotted border-[#999]" />
          <label htmlFor="float-d" className="ml-auto pr-[2px] whitespace-nowrap">Offset at D</label>
          <div className="mr-px flex h-[14px] w-[41px] items-center border border-[#777] bg-white pr-[3px]">
            <input id="float-d" type="text" defaultValue="100" className="w-full min-w-0 pl-[2px] outline-none" />
            <Down />
          </div>
        </div>
      </div>
    </main>
  );
}

const tools = ["stackBox", "stackPlay", "sheetPen", "mesh", "waves", "boxEye", "text", "del", "sheet", "mesh2"];

function ToolRail() {
  return (
    <aside className="flex w-6 shrink-0 flex-col items-center border-l border-[#e6e6e6] bg-[#f8f8f8] pt-[6px]">
      {tools.map((name) => (
        <button key={name} aria-label={name} className="flex h-[21px] w-full items-center justify-center">
          {name === "text" ? (
            <span className="font-['Liberation_Serif',serif] text-[22px] leading-none font-bold text-[#159fbe]">A</span>
          ) : (
            <Icon name={name === "mesh2" ? "mesh" : name} className="size-4" />
          )}
        </button>
      ))}
      <span className="mt-[2px] w-4 border-t border-[#ddd]" />
      <span className="mt-auto mr-auto mb-1 ml-[5px] size-[2px] bg-black" />
    </aside>
  );
}

/* ---------- dialog ---------- */

const offsets = [
  { id: "A", value: "60" },
  { id: "B", value: "25.4" },
  { id: "C", value: "85." },
  { id: "D", value: "100" },
];

function VariableOffsetDialog() {
  return (
    <div role="dialog" aria-label="Variable Offset" className="absolute top-0 left-[236px] w-[196px] bg-[#efefef] text-[8px] text-[#222] shadow-[0_0_2px_#999]">
      <div className="flex h-[18px] items-center bg-[#006b92] px-[5px] text-white">
        <Icon name="gearW" className="size-[9px]" />
        <span className="ml-[5px] text-[9px]">Variable Offset</span>
        <div className="ml-auto flex items-center gap-2">
          <button aria-label="Reset"><Icon name="reset" className="block size-[9px]" /></button>
          <button aria-label="Help" className="text-[11px] leading-none font-bold">?</button>
          <button aria-label="Close dialog"><Icon name="close" className="block size-[9px]" /></button>
        </div>
      </div>
      <div className="flex flex-col gap-[3px] px-[5px] pt-1">
        <section className="border border-[#dcdcdc] bg-[#f8f8f8] px-[5px] pb-[3px]">
          <h3 className="flex h-3 items-center gap-[4px] text-[8px] text-[#27678a]"><Down className="text-[#0b4a66]" />Face to Offset</h3>
          <div className="mt-[5px] flex h-[21px] gap-[2px]">
            <button className="flex flex-1 items-center gap-1 bg-[#f7dd77]">
              <Icon name="check" className="size-[10px]" />
              Select Face (1)
            </button>
            <button aria-label="Face" className="flex w-[21px] items-center justify-center bg-[#f7dd77]"><Svg className="size-4"><g stroke="#b08a5a"><Box /></g></Svg></button>
          </div>
          <div className="mt-px flex h-[17px] items-center justify-between">
            Reverse Direction
            <button aria-label="Reverse Direction" className="flex size-4 items-center justify-center border border-[#777] bg-white"><Icon name="reverse" className="size-3" /></button>
          </div>
        </section>
        <section className="border border-[#dcdcdc] bg-[#f8f8f8] px-[5px] pb-[3px]">
          <h3 className="flex h-4 items-center gap-[4px] text-[8px] text-[#27678a]"><Down className="text-[#0b4a66]" />Offset</h3>
          <label className="flex h-[17px] items-center gap-1">
            <input type="checkbox" className="size-[9px] appearance-none rounded-[2px] border border-[#777] bg-white" />
            Apply to All
          </label>
          <div className="flex flex-col gap-[2px]">
            {offsets.map(({ id, value }) => (
              <div key={id} className="flex h-[15px] items-center justify-between">
                <label htmlFor={`offset-${id}`}>Offset at {id}</label>
                <div className="flex h-[15px] w-[89px] items-center border border-[#888] bg-white pl-1">
                  <input
                    id={`offset-${id}`}
                    type="text"
                    defaultValue={value}
                    className={`min-w-0 leading-[10px] outline-none ${id === "D" ? "w-[14px] bg-[#0a6cc4] text-white" : "w-10"}`}
                  />
                  <div className="relative ml-auto w-[34px]">
                    <select aria-label={`Unit for offset ${id}`} className="block w-full appearance-none bg-transparent text-[9px] leading-[12px]">
                      <option>mm</option>
                    </select>
                    <span className="pointer-events-none absolute top-[5px] right-[2px]"><Down /></span>
                  </div>
                </div>
              </div>
            ))}
          </div>
        </section>
        <button className="mt-px flex h-4 items-center gap-[4px] border border-[#dfe7ea] bg-[#e1ebf0] pl-[5px] text-[#27678a]"><Right />Settings</button>
      </div>
      <div className="flex h-[9px] items-center justify-center">
        <svg className="h-[3px] w-[6px]" viewBox="0 0 6 3" aria-hidden="true"><path d="M0 3h6L3 0z" fill="#000" /></svg>
      </div>
      <div className="mx-[5px] flex justify-end gap-[3px] border-t border-[#dcdcdc] pt-[5px] pr-[5px] pb-[6px]">
        <button className="h-[15px] w-[44px] bg-[#005f86] text-white">OK</button>
        <button className="h-[15px] w-[44px] border border-[#4a94ad] bg-[#f5fafb] text-[#27678a]">Cancel</button>
      </div>
      <svg className="absolute top-[198px] left-[158px] h-4 w-3" viewBox="0 0 12 16" aria-hidden="true">
        <path d="M3 1l2-1 1 6 5 1 1 2-1 5-2 2H5L3 12 0 8l2-1 2 2z" fill="#0a0a0a" />
      </svg>
    </div>
  );
}

export default function App() {
  return (
    <div className="flex min-h-screen flex-col bg-black pt-[18px] font-[Lato,'Liberation_Sans',sans-serif] leading-[1.2]">
      <div className="flex flex-1">
        <div className="w-[5px] shrink-0 bg-[#101010]" />
        <div className="relative flex min-w-0 flex-1 flex-col bg-[#f8f8f8]">
          <TitleBar />
          <Ribbon />
          <SelectionBar />
          <div className="flex flex-1 border-b border-[#bdbdbd]">
            <ResourceBar />
            <PartNavigator />
            <Workspace />
            <ToolRail />
          </div>
          <footer className="flex h-[14px] items-center bg-[#f8f8f8] px-[2px] text-[8px] font-bold text-[#222]">
            <span className="flex-[10]">Select face to offset</span>
            <span>Done Updating Features for Part: continuous update</span>
            <span className="flex flex-[7] justify-end pr-9"><Icon name="cloud" className="size-[10px]" /></span>
          </footer>
          <VariableOffsetDialog />
        </div>
        <div className="flex w-[5px] shrink-0 flex-col bg-[#555]">
          <span className="h-[15px] bg-black" />
          <span className="h-[23px] bg-[#5c5c5c]" />
          <span className="h-[84px] bg-[#c6c6c6]" />
        </div>
      </div>
      <div className="h-[5px] bg-[#222]" />
      <div className="h-[13px]" />
    </div>
  );
}
